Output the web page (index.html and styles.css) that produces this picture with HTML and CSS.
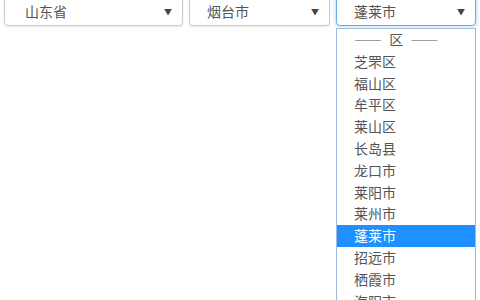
FILE: index.html
```html
<!DOCTYPE html>
<html lang="zh-CN">
<head>
<meta charset="UTF-8" />
<title>省市区联动</title>
<link rel="stylesheet" href="styles.css">
</head>
<body>

<div class="picker">
  <div class="select">
    <span class="value">山东省</span>
    <span class="caret">▼</span>
  </div>
  <div class="select city">
    <span class="value">烟台市</span>
    <span class="caret">▼</span>
  </div>
  <div class="area">
    <div class="select focus">
      <span class="value">蓬莱市</span>
      <span class="caret">▼</span>
    </div>
    <ul class="options">
      <li class="head">—— 区 ——</li>
      <li>芝罘区</li>
      <li>福山区</li>
      <li>牟平区</li>
      <li>莱山区</li>
      <li>长岛县</li>
      <li>龙口市</li>
      <li>莱阳市</li>
      <li>莱州市</li>
      <li class="active">蓬莱市</li>
      <li>招远市</li>
      <li>栖霞市</li>
      <li>海阳市</li>
    </ul>
  </div>
</div>

</body>
</html>
```

FILE: styles.css
```css
html, body {
  height: 300px;
  overflow: hidden;
}
body {
  margin: 0;
  padding: 0 4px;
  background: #fff;
  font-family: "Noto Sans CJK SC", "Noto Sans", sans-serif;
  font-size: 14px;
  color: #555;
}
.picker {
  display: flex;
  align-items: flex-start;
  gap: 6px;
  margin-top: -8px;
}
.select {
  box-sizing: border-box;
  width: 179px;
  height: 34px;
  padding: 4px 10px 0 20px;
  display: flex;
  align-items: center;
  justify-content: space-between;
  border: 1px solid #ccc;
  border-radius: 4px;
  box-shadow: 0 1px 2px rgba(0,0,0,0.1);
  background: #fff;
}
.select.city {
  width: 141px;
  padding-left: 17px;
}
.area {
  width: 140px;
  display: flex;
  flex-direction: column;
  gap: 2px;
}
.area .select {
  width: 140px;
  padding-left: 17px;
}
.select.focus {
  border-color: #66afe9;
  box-shadow: 0 0 4px rgba(102,175,233,0.6);
}
.value {
  line-height: 20px;
}
.caret {
  font-size: 8px;
  color: #444;
}
.options {
  box-sizing: border-box;
  width: 140px;
  margin: 0;
  padding: 0;
  list-style: none;
  background: #fff;
  border: 1px solid #9fb9df;
  border-bottom: none;
}
.options li {
  line-height: 21.8px;
  padding-left: 17px;
  color: #555;
}
.options li.head {
  word-spacing: 4px;
}
.options li.active {
  background: #1e90ff;
  color: #fff;
}
```
